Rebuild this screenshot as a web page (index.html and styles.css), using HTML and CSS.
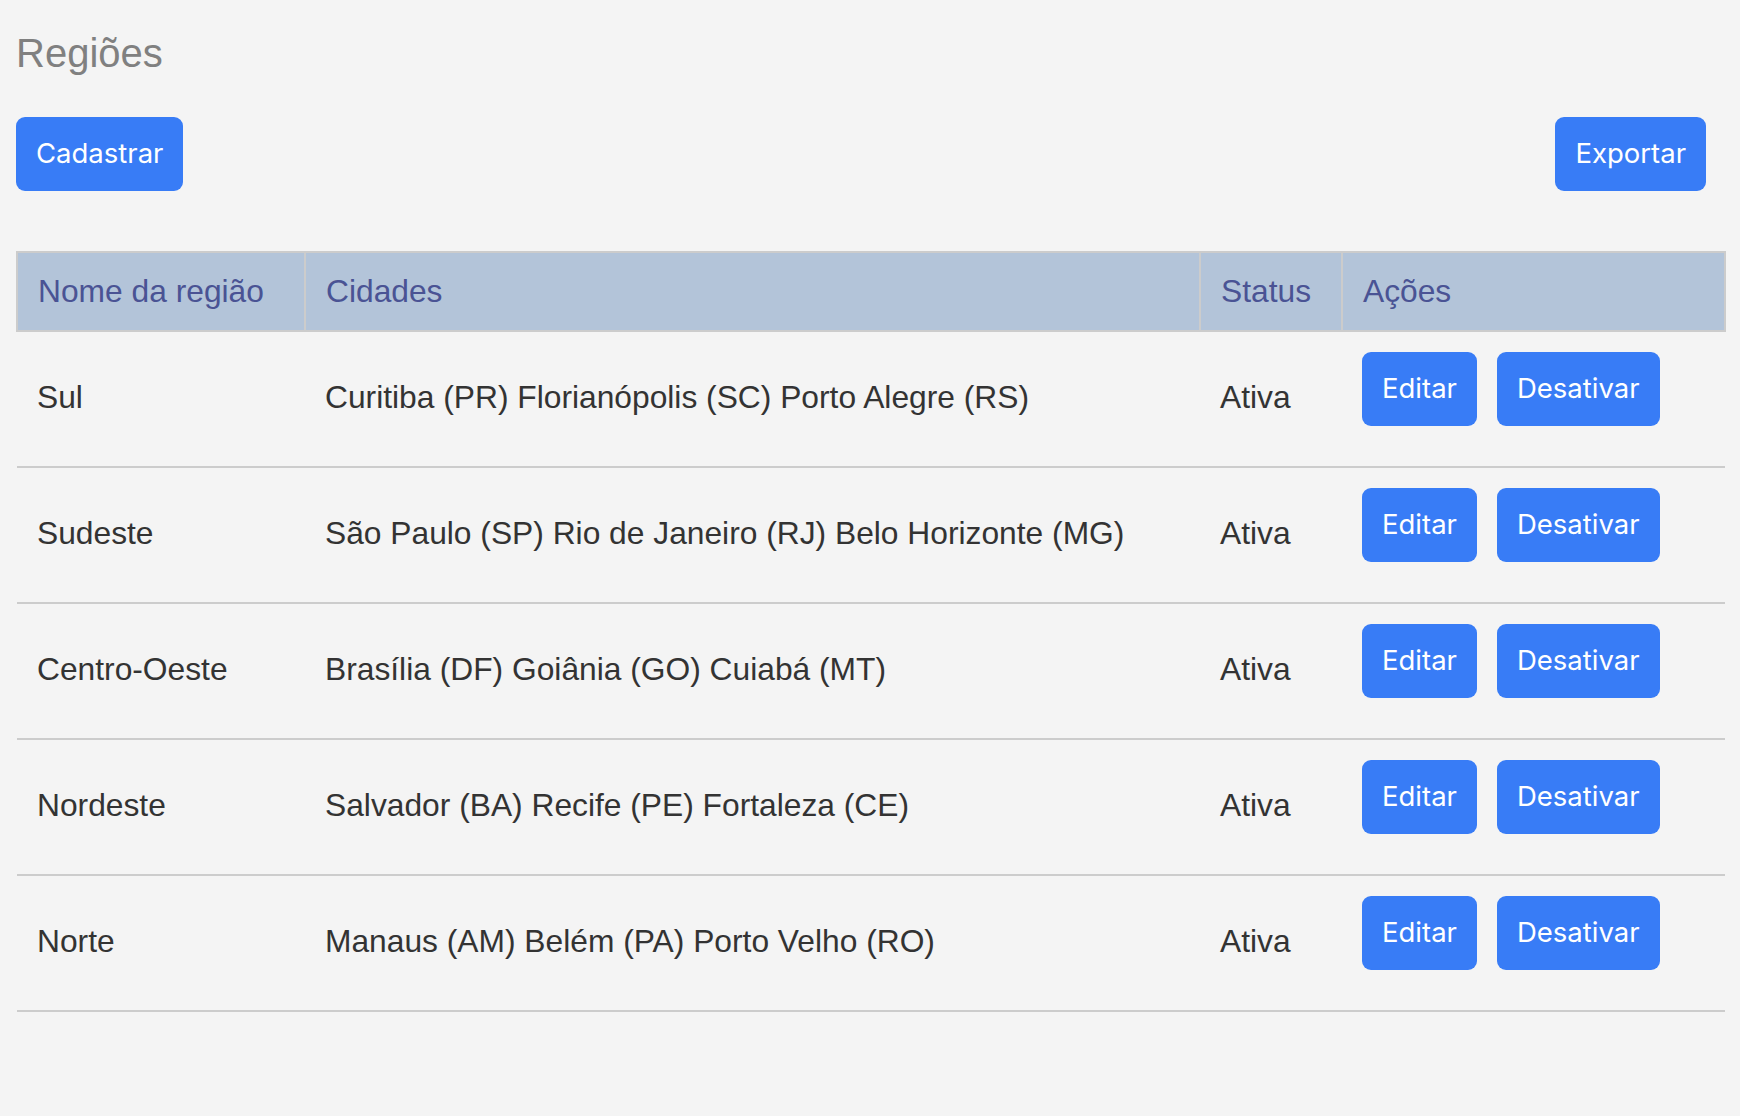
FILE: index.html
```html
<!DOCTYPE html>
<html lang="pt-BR">
<head>
<meta charset="utf-8">
<title>Regiões</title>
<link rel="stylesheet" href="styles.css">
</head>
<body>
<main class="page">
  <h1 class="title">Regiões</h1>
  <div class="toolbar">
    <button class="btn">Cadastrar</button>
    <button class="btn">Exportar</button>
  </div>
  <table class="regions">
    <colgroup>
      <col class="c-name">
      <col class="c-cities">
      <col class="c-status">
      <col class="c-actions">
    </colgroup>
    <thead>
      <tr>
        <th>Nome da região</th>
        <th>Cidades</th>
        <th>Status</th>
        <th>Ações</th>
      </tr>
    </thead>
    <tbody>
      <tr>
        <td>Sul</td>
        <td>Curitiba (PR) Florianópolis (SC) Porto Alegre (RS)</td>
        <td>Ativa</td>
        <td class="actions"><button class="btn">Editar</button><button class="btn">Desativar</button></td>
      </tr>
      <tr>
        <td>Sudeste</td>
        <td>São Paulo (SP) Rio de Janeiro (RJ) Belo Horizonte (MG)</td>
        <td>Ativa</td>
        <td class="actions"><button class="btn">Editar</button><button class="btn">Desativar</button></td>
      </tr>
      <tr>
        <td>Centro-Oeste</td>
        <td>Brasília (DF) Goiânia (GO) Cuiabá (MT)</td>
        <td>Ativa</td>
        <td class="actions"><button class="btn">Editar</button><button class="btn">Desativar</button></td>
      </tr>
      <tr>
        <td>Nordeste</td>
        <td>Salvador (BA) Recife (PE) Fortaleza (CE)</td>
        <td>Ativa</td>
        <td class="actions"><button class="btn">Editar</button><button class="btn">Desativar</button></td>
      </tr>
      <tr>
        <td>Norte</td>
        <td>Manaus (AM) Belém (PA) Porto Velho (RO)</td>
        <td>Ativa</td>
        <td class="actions"><button class="btn">Editar</button><button class="btn">Desativar</button></td>
      </tr>
    </tbody>
  </table>
</main>
</body>
</html>
```
FILE: styles.css
```css
* { box-sizing: border-box; }

html, body {
  margin: 0;
  background: #f4f4f4;
}

body {
  font-family: "Liberation Sans", Arial, Helvetica, sans-serif;
  color: #333333;
}

.page {
  padding: 29px 14px 0 16px;
}

.title {
  margin: 0;
  font-size: 40px;
  line-height: 48px;
  font-weight: 400;
  color: #808080;
}

.toolbar {
  display: flex;
  justify-content: space-between;
  margin-top: 40px;
  padding-right: 20px;
}

.btn {
  display: inline-flex;
  align-items: center;
  justify-content: center;
  height: 74px;
  padding: 0 20px;
  border: none;
  border-radius: 9px;
  background: #387cf6;
  color: #ffffff;
  font-family: Inter, "Noto Sans", sans-serif;
  font-size: 27.5px;
  font-weight: 400;
  line-height: 1;
  cursor: pointer;
}

.regions {
  margin-top: 60px;
  width: 1708px;
  border-collapse: collapse;
  table-layout: fixed;
  font-size: 31.75px;
  line-height: 36px;
}

.c-name { width: 288px; }
.c-cities { width: 895px; }
.c-status { width: 142px; }
.c-actions { width: 383px; }

.regions th {
  background: #b3c4d9;
  color: #4a5394;
  font-weight: 400;
  text-align: left;
  padding: 20px 20px 21px;
  border: 2px solid #cccccc;
}

.regions td {
  padding: 18px 20px 22px;
  border-bottom: 2px solid #cccccc;
  vertical-align: middle;
  white-space: nowrap;
}

.regions td.actions {
  padding: 20px 20px 40px;
  vertical-align: top;
}

.actions .btn {
  margin-right: 20px;
}
```
